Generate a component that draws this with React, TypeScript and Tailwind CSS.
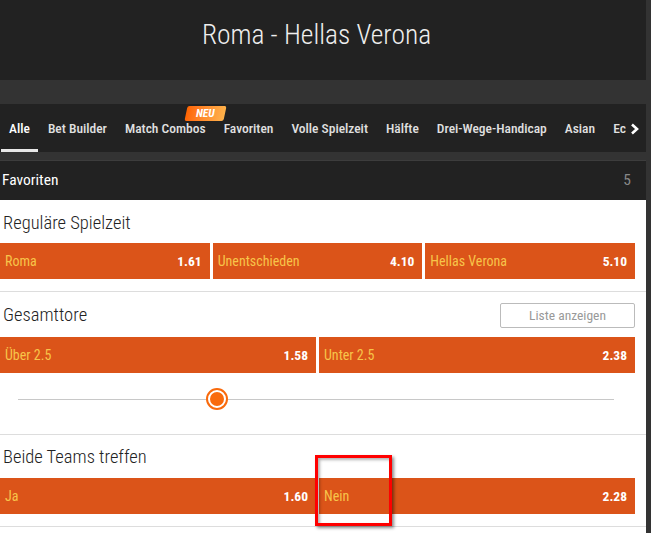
import React from "react";

const font = { fontFamily: '"Roboto Condensed", Roboto, "Liberation Sans", sans-serif' };

function Odd({ label, odd }: { label: string; odd: string }) {
  return (
    <div className="flex-1 h-[36px] bg-[#db5419] flex items-center justify-between pl-[5px] pr-[8px]">
      <span className="text-[14px] text-[#f7c54a]">{label}</span>
      <span className="text-[13.5px] font-bold text-white">{odd}</span>
    </div>
  );
}

const tabs = ["Alle", "Bet Builder", "Match Combos", "Favoriten", "Volle Spielzeit", "Hälfte", "Drei-Wege-Handicap", "Asian", "Ecken"];

export default function App() {
  return (
    <div className="w-[651px] h-[533px] bg-[#333] overflow-hidden relative" style={font}>
      <div className="w-[646px]">
        <div className="h-[80px] bg-[#222] flex items-center justify-center pb-[10px] pr-[13px]">
          <h1 className="text-[27.5px] font-light text-[#eee]">Roma - Hellas Verona</h1>
        </div>
        <div className="h-[24px]" />
        <div className="h-[48px] bg-[#222] relative overflow-hidden flex items-center">
          <div className="flex items-center h-full whitespace-nowrap">
            {tabs.map((t, i) => (
              <div key={t} className="relative h-full flex items-center px-[9px] pt-[1px]">
                <span className={`text-[13.5px] font-medium ${i === 0 ? "text-white" : "text-[#e0e0e0]"}`}>{t}</span>
                {i === 0 && <div className="absolute left-[1px] right-[1px] bottom-0 h-[3px] bg-[#e8e8e8]" />}
                {t === "Match Combos" && (
                  <div className="absolute top-[2px] right-[-10px] w-[39px] h-[15px] -skew-x-12 rounded-[2px] bg-gradient-to-r from-[#ff6400] to-[#ffb24a] flex items-center justify-center">
                    <span className="skew-x-12 text-[11.5px] font-bold italic text-white leading-none">NEU</span>
                  </div>
                )}
              </div>
            ))}
          </div>
          <div className="absolute right-0 top-0 h-full w-[20px] bg-[#222] flex items-center pt-[1px]">
            <svg width="10" height="12" viewBox="0 0 10 12" className="ml-[4px]">
              <path d="M2 1.5 L7 6 L2 10.5" stroke="white" strokeWidth="2.6" fill="none" strokeLinejoin="miter" />
            </svg>
          </div>
        </div>
        <div className="h-[8px]" />
        <div className="h-[40px] bg-[#222] border-t border-[#3d3d3d] flex items-center justify-between pl-[2px] pr-[15px]">
          <span className="text-[15.5px] text-white">Favoriten</span>
          <span className="text-[15.5px] text-[#888]">5</span>
        </div>
        <div className="bg-white">
          <section className="pt-[12px] pb-[12px] border-b border-[#ddd]">
            <div className="h-[24px] flex items-center pl-[3px] mb-[7px]">
              <span className="text-[18.5px] font-light text-[#222]">Reguläre Spielzeit</span>
            </div>
            <div className="flex gap-[3px] w-[635px]">
              <Odd label="Roma" odd="1.61" />
              <Odd label="Unentschieden" odd="4.10" />
              <Odd label="Hellas Verona" odd="5.10" />
            </div>
          </section>
          <section className="pt-[11px] border-b border-[#ddd]">
            <div className="h-[25px] flex items-center justify-between pl-[3px] w-[635px] mb-[9px]">
              <span className="text-[18.5px] font-light text-[#222]">Gesamttore</span>
              <div className="w-[135px] h-[25px] border border-[#bbb] rounded-[2px] flex items-center justify-center">
                <span className="text-[13.5px] text-[#999]">Liste anzeigen</span>
              </div>
            </div>
            <div className="flex gap-[3px] w-[635px]">
              <Odd label="Über 2.5" odd="1.58" />
              <Odd label="Unter 2.5" odd="2.38" />
            </div>
            <div className="h-[61px] relative">
              <div className="absolute left-[18px] w-[596px] top-[26px] h-[1px] bg-[#c8c8c8]" />
              <div className="absolute left-[206px] top-[15px] w-[22px] h-[22px] rounded-full border-2 border-[#f96a0c] bg-white p-[2px]">
                <div className="w-full h-full rounded-full bg-[#f96a0c]" />
              </div>
            </div>
          </section>
          <section className="pt-[11px] pb-[12px] border-b border-[#ddd]">
            <div className="h-[24px] flex items-center pl-[3px] mb-[8px]">
              <span className="text-[18.5px] font-light text-[#222]">Beide Teams treffen</span>
            </div>
            <div className="flex gap-[3px] w-[635px]">
              <Odd label="Ja" odd="1.60" />
              <Odd label="Nein" odd="2.28" />
            </div>
          </section>
          <div className="h-[20px]" />
        </div>
      </div>
      <div className="absolute left-[315px] top-[455px] w-[77px] h-[71px] border-[3px] border-[#ff0000] shadow-[2px_2px_3px_rgba(0,0,0,0.45),inset_2px_2px_3px_rgba(0,0,0,0.3)]" />
    </div>
  );
}
